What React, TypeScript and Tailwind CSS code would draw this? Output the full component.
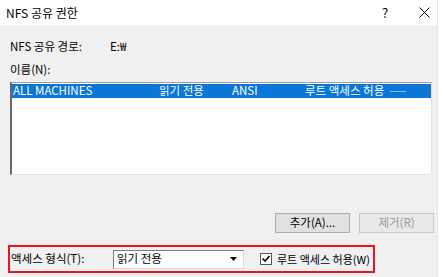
import React from "react";

const font = { fontFamily: '"Noto Sans CJK KR", "Noto Sans", sans-serif' };

export default function App() {
  return (
    <div className="w-[443px] h-[277px] flex bg-white overflow-hidden text-black" style={font}>
      <div className="w-[437px] h-full flex flex-col bg-[#f0f0f0]">
        {/* title bar */}
        <div className="h-[25px] bg-white flex items-center pl-[6px] text-[12px] leading-none">
          <span className="flex-1">NFS 공유 권한</span>
          <span className="w-[37px] text-[13px]">?</span>
          <span className="w-[18px] flex items-center">
            <svg width="11" height="11" viewBox="0 0 11 11">
              <path d="M0.5 0.5L10.5 10.5M10.5 0.5L0.5 10.5" stroke="#000" strokeWidth="1" />
            </svg>
          </span>
        </div>
        <div className="flex flex-col pl-[10px] text-[11.5px] leading-none">
          <div className="mt-[14px] h-[16px] flex items-center">
            <span className="w-[100px]">NFS 공유 경로:</span>
            <span>E:₩</span>
          </div>
          <div className="mt-[7px] h-[16px] flex items-center">이름(N):</div>
          <div className="mt-[4px] w-[422px] h-[93px] bg-white border border-t-[#a0a0a0] border-l-[#696969] border-l-2 border-r-[#e3e3e3] border-b-[#e3e3e3] pt-px">
            <div className="h-[14px] bg-[#0a76d8] text-white flex items-center text-[11.5px] whitespace-nowrap">
              <span className="pl-[1px] w-[147px]">ALL MACHINES</span>
              <span className="w-[73px]">읽기 전용</span>
              <span className="w-[73px]">ANSI</span>
              <span>루트 액세스 허용</span>
              <span className="ml-[6px] w-[16px] h-px bg-[#8fc1ee]" />
            </div>
          </div>
          <div className="mt-[38px] h-[20px] flex pl-[265px] gap-[9px]">
            <div className="w-[75px] h-[20px] bg-[#e1e1e1] border border-[#adadad] flex items-center justify-center text-[11.5px]">
              추가(A)...
            </div>
            <div className="w-[75px] h-[20px] bg-[#e9e9e9] border border-[#c7c7c7] flex items-center justify-center text-[11.5px] text-[#9a9a9a]">
              제거(R)
            </div>
          </div>
          <div className="mt-[12px] -ml-[2px] w-[367px] h-[28px] border-2 border-[#e8141e] flex items-center whitespace-nowrap">
            <span className="pl-[1px] w-[103px]">액세스 형식(T):</span>
            <div className="w-[131px] h-[19px] bg-white border border-t-[#7a7a7a] border-l-[#7a7a7a] border-r-[#dadada] border-b-[#dadada] flex items-center">
              <span className="flex-1 pl-[3px]">읽기 전용</span>
              <svg width="14" height="10" viewBox="0 0 14 10" className="mr-[2px]">
                <path d="M3 3H10L6.5 7Z" fill="#000" />
              </svg>
            </div>
            <div className="ml-[16px] w-[12px] h-[12px] border border-[#555] bg-white flex items-center justify-center shrink-0">
              <svg width="10" height="10" viewBox="0 0 10 10">
                <path d="M1.5 4.5L4 7L8.5 2" stroke="#000" strokeWidth="1.6" fill="none" />
              </svg>
            </div>
            <span className="ml-[5px] text-[11px]">루트 액세스 허용(W)</span>
          </div>
        </div>
      </div>
      <div className="w-px h-full bg-[#cfeef5]" />
      <div className="flex-1 h-full bg-white" />
    </div>
  );
}
